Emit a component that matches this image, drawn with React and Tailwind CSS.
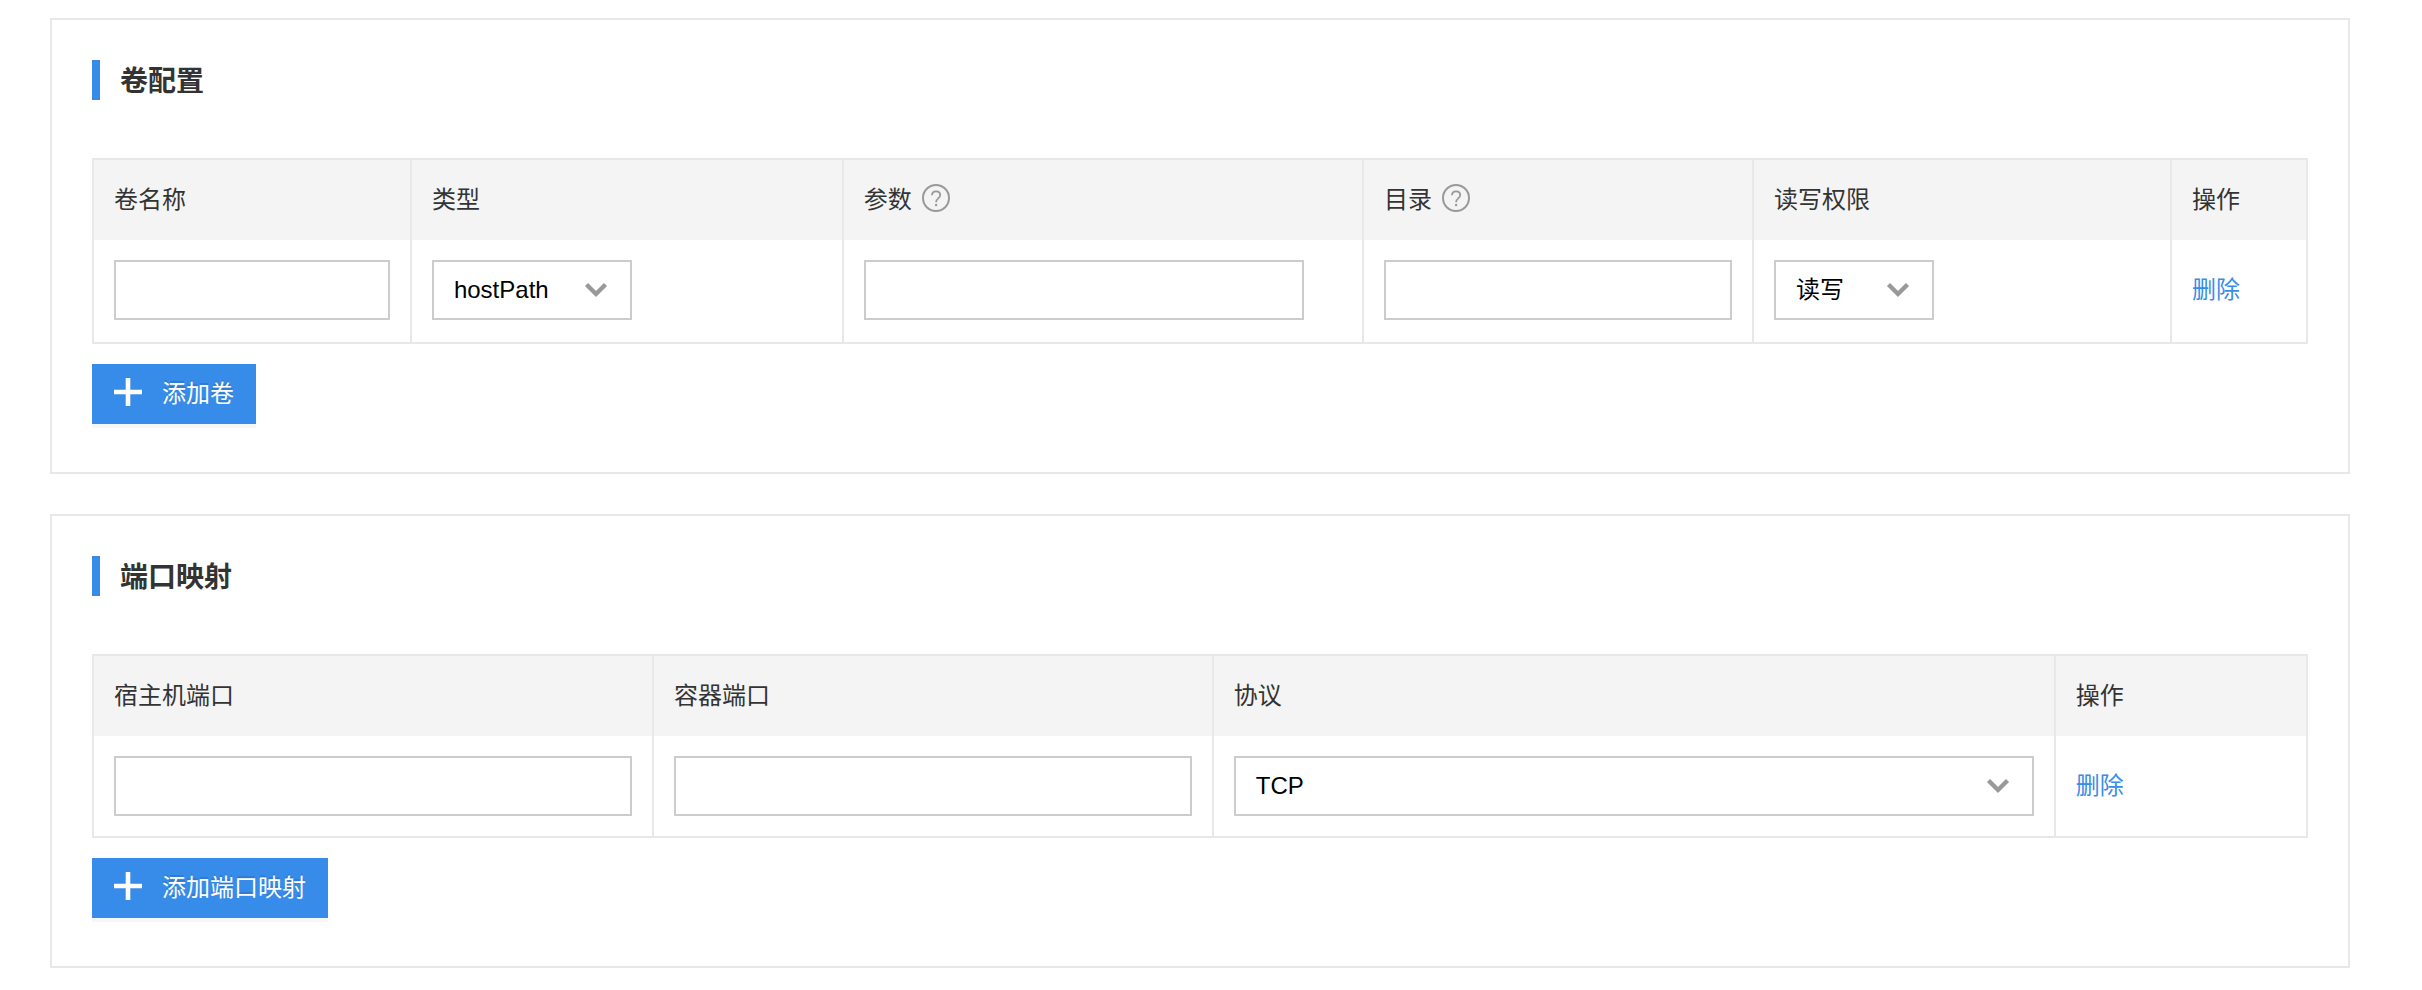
import { useState } from 'react'

const VOLUME_COLUMNS = [
  { title: '卷名称', width: 'w-[14.36%]' },
  { title: '类型', width: 'w-[19.51%]' },
  { title: '参数', width: 'w-[23.49%]', help: '宿主机上的路径' },
  { title: '目录', width: 'w-[17.62%]', help: '容器内的挂载目录' },
  { title: '读写权限', width: 'w-[18.88%]' },
  { title: '操作', width: 'w-[6.14%]' },
]

const PORT_COLUMNS = [
  { title: '宿主机端口', width: 'w-[25.29%]' },
  { title: '容器端口', width: 'w-[25.29%]' },
  { title: '协议', width: 'w-[38.03%]' },
  { title: '操作', width: 'w-[11.39%]' },
]

function HelpIcon({ label }) {
  return (
    <svg className="size-7 shrink-0 text-[#999]" viewBox="0 0 28 28" fill="none" stroke="currentColor" role="img" aria-label={label}>
      <circle cx="14" cy="14" r="13" strokeWidth="2" />
      <path d="M10 11.3c0-2.4 1.7-4 4.1-4 2.4 0 4.1 1.5 4.1 3.7 0 1.8-1 2.6-2.2 3.6-1.3 1-1.9 1.8-1.9 3.6" strokeWidth="1.8" />
      <circle cx="14.1" cy="21" r="1.2" fill="currentColor" stroke="none" />
    </svg>
  )
}

function PlusIcon() {
  return (
    <svg className="size-7 shrink-0" viewBox="0 0 28 28" fill="none" stroke="currentColor" strokeWidth="4.6" aria-hidden="true">
      <path d="M14 0v28M0 14h28" />
    </svg>
  )
}

// 面板：蓝色竖条 + 标题
function Panel({ title, children }) {
  return (
    <section className="border-2 border-[#e8e8e8] px-10 pt-10 pb-12">
      <h2 className="mb-[58px] border-l-8 border-[#388ce9] pt-1 pl-5 text-[28px] leading-9 font-bold">{title}</h2>
      {children}
    </section>
  )
}

function DataTable({ columns, children }) {
  return (
    <table className="mb-5 w-full table-fixed border-separate border-spacing-0 border-y-2 border-r-2 border-[#e8e8e8]">
      <thead>
        <tr className="bg-[#f4f4f4]">
          {columns.map((col) => (
            <th key={col.title} className={`${col.width} border-l-2 border-[#e8e8e8] px-5 py-6 text-left font-normal`}>
              <div className="flex items-start gap-2.5">
                {col.title}
                {col.help && <HelpIcon label={col.help} />}
              </div>
            </th>
          ))}
        </tr>
      </thead>
      <tbody>{children}</tbody>
    </table>
  )
}

function Cell({ children }) {
  return <td className="border-l-2 border-[#e8e8e8] p-5 align-top">{children}</td>
}

function TextInput({ label, width = 'w-full' }) {
  return (
    <input
      type="text"
      aria-label={label}
      className={`${width} block h-15 max-w-full border-2 border-[#ccc] bg-white px-5 text-black outline-none focus:border-[#388ce9]`}
    />
  )
}

function Select({ label, options, width = 'w-full' }) {
  const [value, setValue] = useState(options[0])

  return (
    <div className={`${width} relative max-w-full`}>
      <select
        aria-label={label}
        value={value}
        onChange={(e) => setValue(e.target.value)}
        className="block h-15 w-full appearance-none border-2 border-[#ccc] bg-white pr-14 pl-5 text-black outline-none focus:border-[#388ce9]"
      >
        {options.map((option) => (
          <option key={option}>{option}</option>
        ))}
      </select>
      <svg
        className="pointer-events-none absolute top-[22px] right-6 h-4 w-6 text-[#999]"
        viewBox="0 0 24 16"
        fill="none"
        stroke="currentColor"
        strokeWidth="4.4"
        aria-hidden="true"
      >
        <path d="M2.5 2.5 12 12l9.5-9.5" />
      </svg>
    </div>
  )
}

function AddButton({ children }) {
  return (
    <button
      type="button"
      className="flex cursor-pointer items-start gap-5 bg-[#388ce9] px-[22px] py-3.5 text-white shadow-[0_4px_0_rgba(0,0,0,0.035)] text-shadow-[0_-2px_0_rgba(0,0,0,0.12)] hover:bg-[#2f7fd8]"
    >
      <PlusIcon />
      {children}
    </button>
  )
}

function DeleteLink() {
  return (
    <a href="#" className="block leading-15 text-[#388ce9] hover:underline">
      删除
    </a>
  )
}

export default function App() {
  return (
    <main className="flex flex-col gap-10 bg-white pt-[18px] pr-[72px] pb-[22px] pl-[50px] font-['Liberation_Sans','Noto_Sans_CJK_SC',sans-serif] text-2xl text-[#333]">
      {/* 卷配置 */}
      <Panel title="卷配置">
        <DataTable columns={VOLUME_COLUMNS}>
          <tr className="h-[102px]">
            <Cell><TextInput label="卷名称" /></Cell>
            <Cell><Select label="类型" options={['hostPath', 'emptyDir']} width="w-50" /></Cell>
            <Cell><TextInput label="参数" width="w-110" /></Cell>
            <Cell><TextInput label="目录" /></Cell>
            <Cell><Select label="读写权限" options={['读写', '只读']} width="w-40" /></Cell>
            <Cell><DeleteLink /></Cell>
          </tr>
        </DataTable>
        <AddButton>添加卷</AddButton>
      </Panel>

      {/* 端口映射 */}
      <Panel title="端口映射">
        <DataTable columns={PORT_COLUMNS}>
          <tr>
            <Cell><TextInput label="宿主机端口" /></Cell>
            <Cell><TextInput label="容器端口" /></Cell>
            <Cell><Select label="协议" options={['TCP', 'UDP']} /></Cell>
            <Cell><DeleteLink /></Cell>
          </tr>
        </DataTable>
        <AddButton>添加端口映射</AddButton>
      </Panel>
    </main>
  )
}
